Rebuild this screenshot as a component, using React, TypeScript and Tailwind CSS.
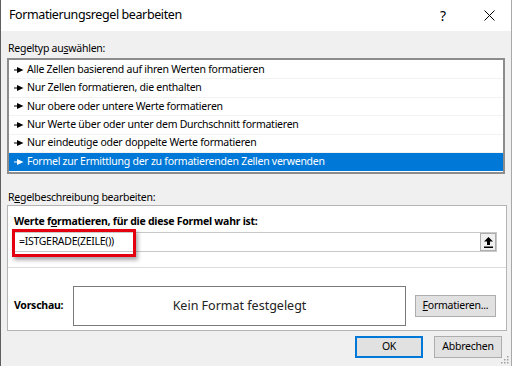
import type { ReactNode } from "react";

const FONT = "font-['Noto_Sans','Open_Sans',sans-serif]";
const BODY = "text-[10.5px] tracking-[-0.25px]";

const RULE_TYPES = [
  "Alle Zellen basierend auf ihren Werten formatieren",
  "Nur Zellen formatieren, die enthalten",
  "Nur obere oder untere Werte formatieren",
  "Nur Werte über oder unter dem Durchschnitt formatieren",
  "Nur eindeutige oder doppelte Werte formatieren",
  "Formel zur Ermittlung der zu formatierenden Zellen verwenden",
];

function RowArrow({ color }: { color: string }) {
  return (
    <svg width="10" height="6" viewBox="0 0 10 6" className="shrink-0">
      <rect x="0" y="2.5" width="4" height="1" fill={color} />
      <polygon points="3,0 9.5,3 3,6" fill={color} />
    </svg>
  );
}

function UploadIcon() {
  return (
    <svg width="9" height="11" viewBox="0 0 9 11">
      <polygon points="4.5,0 9,4.5 6,4.5 6,8 3,8 3,4.5 0,4.5" fill="#000" />
      <rect x="0" y="9.5" width="9" height="1.5" fill="#000" />
    </svg>
  );
}

function Btn({ children, primary }: { children: ReactNode; primary?: boolean }) {
  return (
    <button
      className={`h-[22px] w-[68px] bg-[#e1e1e1] ${BODY} text-black ${
        primary ? "border border-[#0078d7] shadow-[inset_0_0_0_1px_#0078d7]" : "border border-[#adadad]"
      }`}
    >
      {children}
    </button>
  );
}

export default function App() {
  return (
    <div className={`relative w-[512px] h-[366px] overflow-hidden bg-[#f0f0f0] border-l border-[#5f5f5f] border-r border-r-[#a8a8a8] ${FONT} text-black`}>
      {/* title bar */}
      <div className="h-[31px] bg-white flex items-center pl-[8px]">
        <span className="text-[12.5px] tracking-[-0.4px]">Formatierungsregel bearbeiten</span>
        <span className="ml-auto text-[14px] mr-[38px]">?</span>
        <svg width="11" height="11" viewBox="0 0 11 11" className="mr-[16px]">
          <path d="M0.5 0.5 L10.5 10.5 M10.5 0.5 L0.5 10.5" stroke="#000" strokeWidth="1" />
        </svg>
      </div>

      <div className="px-[6px]">
        <div className={`mt-[9px] h-[16px] leading-[16px] ${BODY} pl-[1px]`}>
          Regeltyp au<span className="underline">s</span>wählen:
        </div>

        <div className="mt-[2px] border-2 border-[#8c8c8c] bg-white py-[1px]">
          {RULE_TYPES.map((t, i) => {
            const sel = i === RULE_TYPES.length - 1;
            return (
              <div
                key={t}
                className={`h-[18.4px] flex items-center gap-[3px] pl-[5px] ${BODY} ${
                  sel ? "bg-[#0078d7] text-white" : "border-b border-[#f2f2f2]"
                }`}
              >
                <RowArrow color={sel ? "#fff" : "#000"} />
                <span>{t}</span>
              </div>
            );
          })}
        </div>

        <div className={`mt-[15px] h-[16px] leading-[16px] ${BODY} pl-[1px]`}>
          R<span className="underline">e</span>gelbeschreibung bearbeiten:
        </div>

        <div className="w-[500px] h-[126px] border border-[#b4b4b4] bg-white flex flex-col">
          <div className="pl-[6px] pr-[9px] pt-[7px]">
            <div className={`h-[16px] leading-[16px] ${BODY} font-bold`}>
              Werte f<span className="underline">o</span>rmatieren, für die diese Formel wahr ist:
            </div>
            <div className="mt-[3px] h-[20px] border border-[#c8c8c8] flex items-center">
              <span className="pl-[4px] text-[10.5px] tracking-[-0.3px]">=ISTGERADE(ZEILE())</span>
              <div className="ml-auto h-[18px] w-[16px] bg-[#f0f0f0] border border-[#adadad] flex items-center justify-center">
                <UploadIcon />
              </div>
            </div>
          </div>
          <div className="mt-[15px] border-t border-[#dcdcdc]" />
          <div className="flex items-center mt-[18px] pl-[6px]">
            <span className={`w-[59px] ${BODY} font-bold`}>Vorschau:</span>
            <div className="w-[333px] h-[40px] border border-[#7a7a7a] flex items-center justify-center text-[12.5px] text-[#222]">
              Kein Format festgelegt
            </div>
            <button className={`ml-[9px] h-[22px] w-[81px] bg-[#e1e1e1] border border-[#adadad] ${BODY}`}>
              <span className="underline">F</span>ormatieren...
            </button>
          </div>
        </div>

        <div className="mt-[5px] flex justify-end gap-[11px] pr-[3px]">
          <Btn primary>OK</Btn>
          <Btn>Abbrechen</Btn>
        </div>
      </div>

      {/* annotation box */}
      <div className="absolute left-[11px] top-[229px] w-[124px] h-[28px] border-[3px] border-[#e4000f] shadow-[2px_3px_4px_rgba(0,0,0,0.35)]" />

      {/* size grip */}
      <svg width="9" height="9" viewBox="0 0 9 9" className="absolute right-[2px] bottom-[2px]">
        {[
          [7, 1],
          [4, 4], [7, 4],
          [1, 7], [4, 7], [7, 7],
        ].map(([x, y]) => (
          <rect key={`${x}-${y}`} x={x} y={y} width="1.5" height="1.5" fill="#a0a0a0" />
        ))}
      </svg>
    </div>
  );
}
